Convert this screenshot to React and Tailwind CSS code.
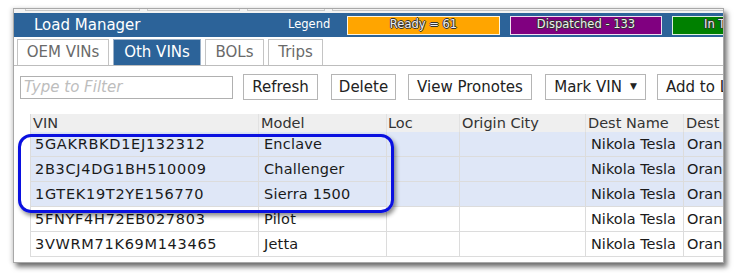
import React from "react";

const cols = "grid grid-cols-[228px_128px_73px_126px_98px_120px]";

const rows = [
  { vin: "5GAKRBKD1EJ132312", model: "Enclave", sel: true },
  { vin: "2B3CJ4DG1BH510009", model: "Challenger", sel: true },
  { vin: "1GTEK19T2YE156770", model: "Sierra 1500", sel: true },
  { vin: "5FNYF4H72EB027803", model: "Pilot", sel: false },
  { vin: "3VWRM71K69M143465", model: "Jetta", sel: false },
];

function Btn({ children, w }) {
  return (
    <div
      className={`h-[26px] ${w} shrink-0 border border-[#b5b5b5] bg-white flex items-center justify-center text-[15px] text-[#222] whitespace-nowrap`}
    >
      {children}
    </div>
  );
}

export default function App() {
  const outline =
    "[text-shadow:1px_0_0_#333,-1px_0_0_#333,0_1px_0_#333,0_-1px_0_#333]";
  return (
    <div
      className="w-[735px] h-[273px] bg-white overflow-hidden pt-[8px] pl-[13px]"
      style={{ fontFamily: '"DejaVu Sans", Verdana, sans-serif' }}
    >
      <div className="relative w-[711px] h-[255px] bg-white border border-[#a8a8a8] overflow-hidden shadow-[3px_4px_5px_rgba(0,0,0,0.55),-2px_0_4px_rgba(0,0,0,0.12)]">
        {/* top strip */}
        <div className="h-[4px] bg-[#f3f3f3] flex gap-[7px] pl-[11px]">
          <div className="w-[115px] h-[2px] shrink-0 border-b border-x border-[#c8c8c8]" />
          <div className="w-[93px] h-[2px] shrink-0 border-b border-x border-[#c8c8c8]" />
          <div className="w-[78px] h-[2px] shrink-0 border-b border-x border-[#c8c8c8]" />
          <div className="w-[400px] h-[2px] shrink-0 border-b border-x border-[#c8c8c8]" />
        </div>
        {/* header bar */}
        <div className="h-[24px] bg-[#2c6399] flex items-center whitespace-nowrap">
          <div className="pl-[20px] text-[15px] text-white w-[274px] shrink-0">Load Manager</div>
          <div className="text-[11.5px] text-white w-[59px] shrink-0">Legend</div>
          <div
            className={`w-[153px] h-[19px] shrink-0 bg-[#ffa500] border border-[#fff6e0] flex items-center justify-center text-[11.5px] text-[#eee] ${outline}`}
          >
            Ready = 61
          </div>
          <div
            className={`ml-[10px] w-[152px] h-[19px] shrink-0 bg-[#800080] border border-[#f0e0f0] flex items-center justify-center text-[11.5px] text-[#eee] ${outline}`}
          >
            Dispatched - 133
          </div>
          <div
            className={`ml-[10px] w-[152px] h-[19px] shrink-0 bg-[#008000] border border-[#e0f0e0] flex items-center justify-start pl-[31px] text-[11.5px] text-[#eee] ${outline}`}
          >
            In Transit
          </div>
        </div>
        {/* tabs */}
        <div className="flex items-end h-[29px] pl-[3px] gap-[4px] text-[15px] border-b border-[#bdbdbd]">
          <div className="w-[92px] h-[26px] border border-b-0 border-[#c4c4c4] bg-white text-[#6a6a6a] flex items-center justify-center">
            OEM VINs
          </div>
          <div className="w-[88px] h-[26px] border border-b-0 border-[#9ab0c8] bg-[#2c6399] text-white flex items-center justify-center">
            Oth VINs
          </div>
          <div className="w-[59px] h-[26px] border border-b-0 border-[#c4c4c4] bg-white text-[#6a6a6a] flex items-center justify-center">
            BOLs
          </div>
          <div className="w-[55px] h-[26px] border border-b-0 border-[#c4c4c4] bg-white text-[#6a6a6a] flex items-center justify-center">
            Trips
          </div>
        </div>
        {/* toolbar */}
        <div className="flex items-center pt-[8px] pl-[6px] whitespace-nowrap">
          <div className="w-[213px] h-[23px] shrink-0 border border-[#b0b0b0] flex items-center pl-[3px] text-[15px] italic text-[#bdbdbd]">
            Type to Filter
          </div>
          <div className="ml-[10px]"><Btn w="w-[75px]">Refresh</Btn></div>
          <div className="ml-[13px]"><Btn w="w-[65px]">Delete</Btn></div>
          <div className="ml-[12px]"><Btn w="w-[124px]">View Pronotes</Btn></div>
          <div className="ml-[13px]">
            <Btn w="w-[101px]">
              Mark VIN<span className="ml-[8px] text-[9px]">▼</span>
            </Btn>
          </div>
          <div className="ml-[11px] shrink-0">
            <div className="h-[26px] w-[90px] border border-[#b5b5b5] bg-white flex items-center pl-[8px] text-[15px] text-[#222]">
              Add to List
            </div>
          </div>
        </div>
        {/* table */}
        <div className="mt-[14px] ml-[16px] whitespace-nowrap">
          <div className={`${cols} h-[18px] bg-[#efefef] text-[14.5px] text-[#333] leading-[19px] border-l border-[#dcdcdc]`}>
            <div className="pl-[2px] border-r border-[#e2e2e2] overflow-hidden">VIN</div>
            <div className="pl-[2px] border-r border-[#e2e2e2] overflow-hidden">Model</div>
            <div className="pl-[1px] border-r border-[#e2e2e2] overflow-hidden">Loc</div>
            <div className="pl-[2px] border-r border-[#e2e2e2] overflow-hidden">Origin City</div>
            <div className="pl-[2px] border-r border-[#e2e2e2] overflow-hidden">Dest Name</div>
            <div className="pl-[2px] overflow-hidden">Dest City</div>
          </div>
          {rows.map((r) => (
            <div
              key={r.vin}
              className={`${cols} h-[25px] text-[14.5px] text-[#1a1a1a] leading-[25px] border-b border-l border-[#dcdcdc] ${r.sel ? "bg-[#dfe7f7]" : "bg-white"}`}
            >
              <div className="pl-[4px] tracking-[0.7px] border-r border-[#dcdcdc] overflow-hidden">{r.vin}</div>
              <div className="pl-[5px] tracking-[0.2px] border-r border-[#dcdcdc] overflow-hidden">{r.model}</div>
              <div className="border-r border-[#dcdcdc]" />
              <div className="border-r border-[#dcdcdc]" />
              <div className="pl-[5px] border-r border-[#dcdcdc] overflow-hidden">Nikola Tesla</div>
              <div className="pl-[3px] overflow-hidden">Orange</div>
            </div>
          ))}
        </div>
        {/* highlight annotation */}
        <div className="absolute left-[4px] top-[125px] w-[376px] h-[79px] rounded-[13px] border-[3px] border-[#0a10e0] shadow-[2px_3px_4px_rgba(0,0,0,0.45)] pointer-events-none" />
      </div>
    </div>
  );
}
